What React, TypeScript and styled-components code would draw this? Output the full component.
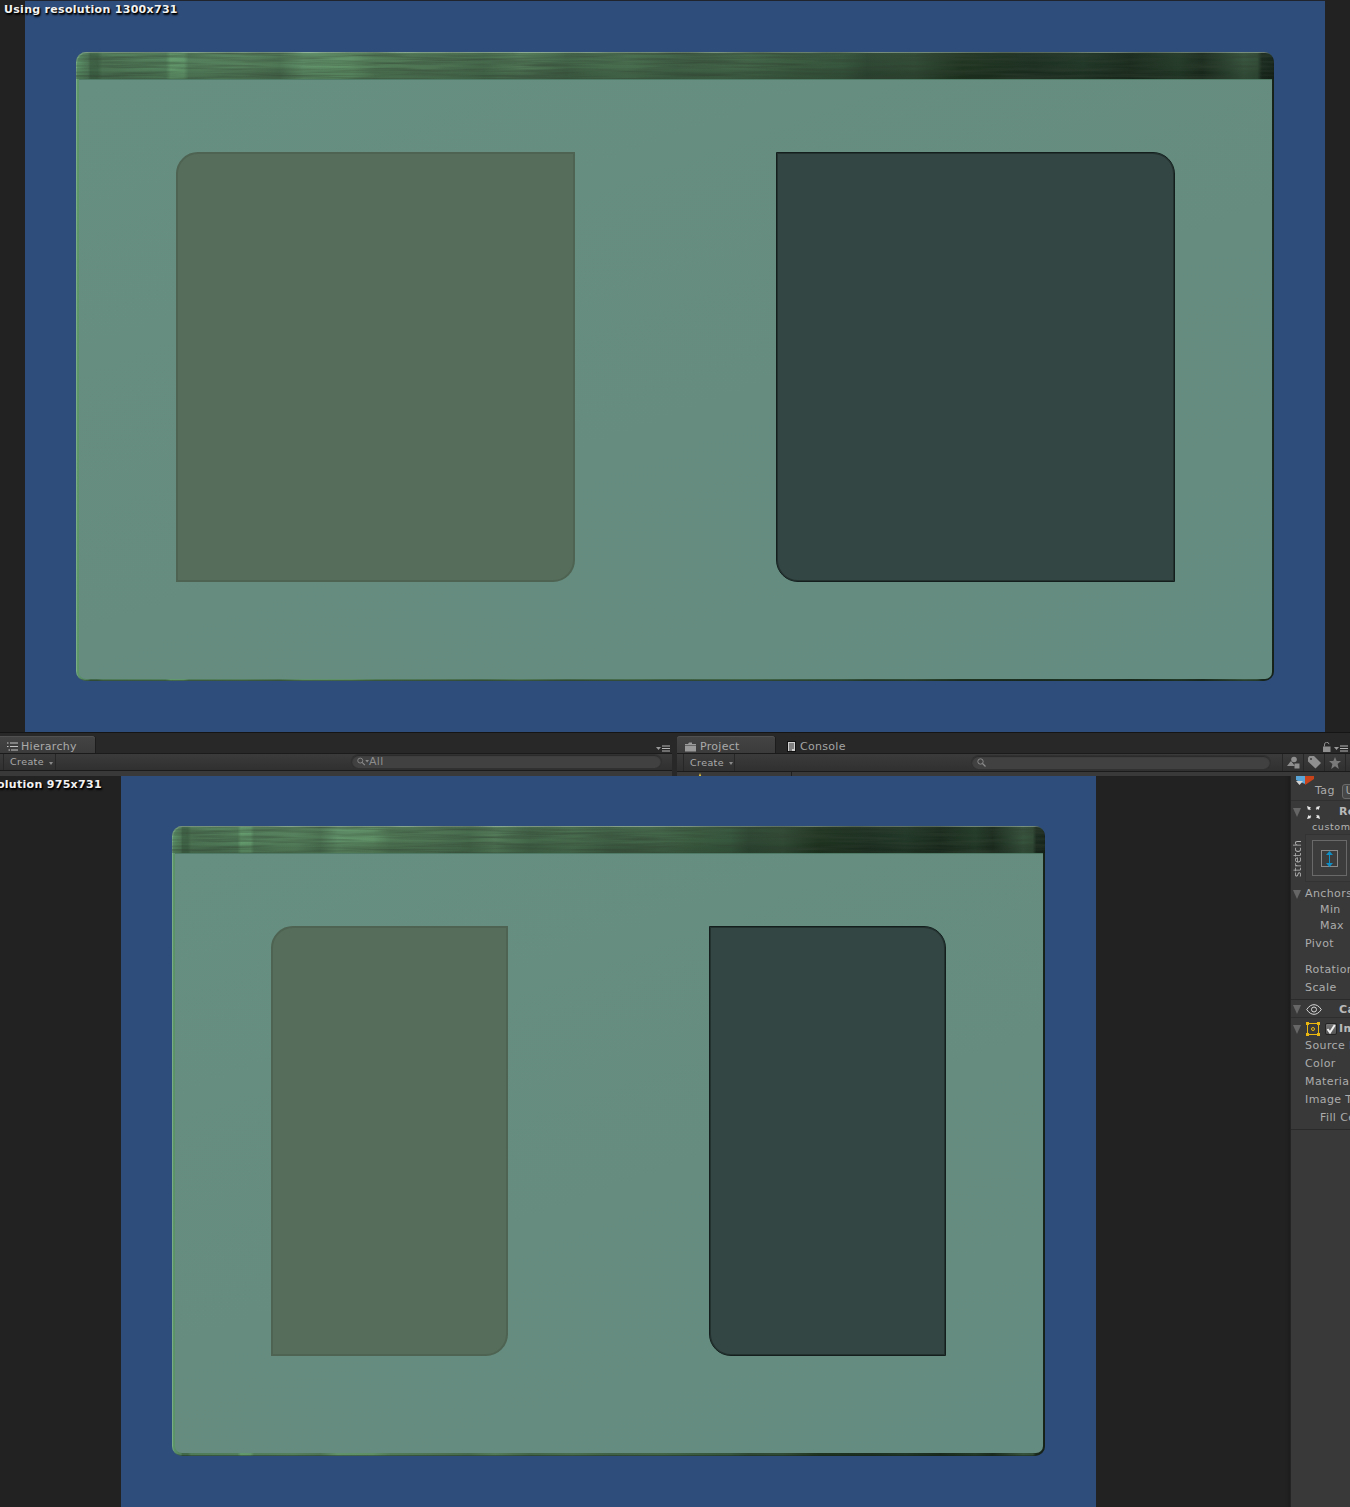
import React from 'react';
import styled, { createGlobalStyle } from 'styled-components';

const Global = createGlobalStyle`
  html, body { margin: 0; padding: 0; background: #222; }
  #root { width: 1350px; height: 1507px; overflow: hidden; }
  * { box-sizing: border-box; }
  svg { flex: none; }
`;

const FRAME_STOPS = `
  #5f9a6c 0%, #527f5c 1%, #426a4a 1.2%, #426a4a 1.8%, #507b58 2.2%, #527f5b 7.5%, #639a6c 7.9%, #61966a 9%, #527d5a 9.4%,
  #55805c 14%, #4d7554 17%, #61936a 19%, #5e8f65 23%, #517b57 25%, #4d7353 30%, #466b4c 34%, #527a58 37%,
  #426548 41%, #486d4e 46%, #406246 50%, #426548 56%, #3a5b3f 60%, #36563d 64%, #2d4733 66%, #304b35 70%,
  #1f3420 74%, #1c2f21 80%, #203626 84%, #192a1c 88%, #233a28 92%, #1a2b1d 94%, #36533d 97.5%, #314c37 98.6%, #1a2a1e 99%, #16241a 100%
`;

const Page = styled.div`
  width: 1350px;
  height: 1507px;
  display: flex;
  flex-direction: column;
  background: #222;
`;

const GameView = styled.section<{ $h: number; $left: number }>`
  position: relative;
  height: ${p => p.$h}px;
  flex: none;
  padding-left: ${p => p.$left}px;
  background: #222;
  overflow: hidden;
`;

const Stage = styled.div<{ $blue: number; $pt: number }>`
  width: ${p => p.$blue}px;
  height: 100%;
  padding: ${p => p.$pt}px 51px 51px;
  background: #2f4d7b;
  box-shadow: inset 0 ${p => (p.$pt > 50 ? 1 : 0)}px 0 #20242c;
`;

const ResolutionLabel = styled.span<{ $right: number; $top: number }>`
  position: absolute;
  top: ${p => p.$top}px;
  left: ${p => p.$right}px;
  font: bold 11px/15px "DejaVu Sans", sans-serif;
  letter-spacing: 0.3px;
  color: #f2f2f2;
  white-space: nowrap;
  text-shadow: 1px 1px 1px #000, 1px 2px 2px #000;
`;

const Card = styled.div`
  height: 100%;
  display: flex;
  flex-direction: column;
  padding: 0 2px 3px 3px;
  border-radius: 10px;
  background: linear-gradient(90deg, ${FRAME_STOPS});
  box-shadow: inset 1px 1px 0 rgba(190, 220, 195, 0.3), inset -1px -1px 0 rgba(20, 30, 24, 0.4);
  position: relative;
`;

const TitleBar = styled.div`
  position: relative;
  height: 27px;
  flex: none;
  margin: 0 -2px 0 -3px;
  border-radius: 10px 10px 0 0;
  overflow: hidden;
  background: linear-gradient(180deg, rgba(255,255,255,.3) 0, rgba(255,255,255,.02) 5%, rgba(0,0,0,0) 60%, rgba(0,0,0,.1) 78%, rgba(0,0,0,.12) 100%);
`;

const Grain = styled.svg`
  position: absolute;
  inset: 0;
  width: 100%;
  height: 100%;
`;

const CardBody = styled.div<{ $pl: number }>`
  flex: 1;
  display: flex;
  justify-content: space-between;
  padding: 72px 97px 97px ${p => p.$pl}px;
  border-top: 1px solid #4f7a66;
  border-radius: 0 0 7px 7px;
  background: linear-gradient(160deg, #668e81 0%, #658c7f 55%, #658c80 100%);
`;

const Panel = styled.div<{ $w: number; $tone: 'olive' | 'dark' }>`
  width: ${p => p.$w}px;
  height: 430px;
  border: ${p => (p.$tone === 'olive' ? '2px solid #4e6351' : '1px solid #131e1d')};
  box-shadow: ${p => (p.$tone === 'olive' ? 'none' : 'inset 0 0 0 1px #24322f')};
  background: ${p => (p.$tone === 'olive' ? '#566d5b' : '#344644')};
  border-radius: ${p => (p.$tone === 'olive' ? '22px 0 22px 0' : '0 22px 0 22px')};
`;

const Divider = styled.div`
  height: 44px;
  flex: none;
  display: grid;
  grid-template-columns: 672px 1fr;
  column-gap: 5px;
  background: #282828;
  border-top: 1px solid #151515;
  font: 11px/14px "DejaVu Sans", sans-serif;
  letter-spacing: 0.3px;
  color: #b4b4b4;
`;

const Dock = styled.div`
  display: flex;
  flex-direction: column;
  min-width: 0;
`;

const TabRow = styled.div`
  height: 20px;
  flex: none;
  padding-top: 3px;
  display: flex;
  align-items: stretch;
  position: relative;
`;

const Tab = styled.div<{ $active?: boolean; $w: number }>`
  width: ${p => p.$w}px;
  flex: none;
  display: flex;
  align-items: center;
  gap: 3px;
  padding: 4px 0 0 7px;
  border-radius: 0 3px 0 0;
  color: ${p => (p.$active ? '#aaa' : '#a4a4a4')};
  background: ${p => (p.$active ? 'linear-gradient(#444, #3b3b3b)' : 'transparent')};
  box-shadow: ${p => (p.$active ? 'inset 0 1px 0 #505050, 1px 0 0 #1d1d1d' : 'none')};
`;

const RoundTab = styled(Tab)<{ $pad?: number }>`
  border-radius: 3px 3px 0 0;
  padding-left: ${p => p.$pad ?? 8}px;
  gap: 4px;
`;

const TabTools = styled.div`
  margin-left: auto;
  display: flex;
  align-items: flex-end;
  gap: 3px;
  padding: 0 2px 1px 0;
`;

const Toolbar = styled.div<{ $extra?: number }>`
  height: ${p => 18 + (p.$extra ?? 0)}px;
  flex: none;
  display: flex;
  align-items: center;
  background: linear-gradient(#3b3b3b, #303030);
  border-top: 1px solid #1b1b1b;
  border-bottom: 1px solid #1b1b1b;
`;

const CreateButton = styled.div<{ $pad: number; $w: number }>`
  width: ${p => p.$w}px;
  flex: none;
  height: 100%;
  margin-left: ${p => p.$pad}px;
  padding-left: 6px;
  display: flex;
  align-items: center;
  gap: 5px;
  font-size: 9.5px;
  letter-spacing: 0.4px;
  color: #aaa;
  border-left: 1px solid #272727;
  border-right: 1px solid #272727;
`;

const Caret = styled.i`
  width: 0;
  height: 0;
  margin-top: 2px;
  border: 2.5px solid transparent;
  border-top: 3px solid #8a8a8a;
  border-bottom: 0;
`;

const SearchPill = styled.div<{ $left: number; $w: number; $mt?: number }>`
  width: ${p => p.$w}px;
  flex: none;
  height: 13px;
  margin: ${p => p.$mt ?? 0}px 0 0 ${p => p.$left}px;
  padding-left: 5px;
  display: flex;
  align-items: center;
  gap: 0;
  border-radius: 7px;
  background: #414141;
  box-shadow: inset 0 1px 1px #2a2a2a, 0 0 0 1px #313131;
  font-size: 11px;
  color: #8d8d8d;
`;

const Strip = styled.div`
  flex: 1;
  background: #393939;
  overflow: hidden;
`;

const TreeColumn = styled.div`
  width: 115px;
  height: 100%;
  border-right: 1px solid #1f1f1f;
  padding: 1px 0 0 19px;
  display: flex;
`;

const IconCell = styled.div<{ $gap?: number }>`
  width: 21px;
  height: 100%;
  flex: none;
  margin-left: ${p => p.$gap ?? 0}px;
  display: flex;
  align-items: center;
  justify-content: center;
  border-left: 1px solid #272727;
`;

const Bottom = styled.div`
  flex: 1;
  display: flex;
  min-height: 0;
`;

const Inspector = styled.aside`
  width: 60px;
  flex: none;
  background: #393939;
  border-left: 1px solid #242424;
  overflow: hidden;
  font: 11px/14px "DejaVu Sans", sans-serif;
  letter-spacing: 0.4px;
  color: #acacac;
  white-space: nowrap;
`;

const TagRow = styled.div`
  height: 25px;
  position: relative;
  padding: 8px 0 0 24px;
  display: flex;
  gap: 7px;
  border-bottom: 1px solid #303030;
`;

const CubeIcon = styled.svg`
  position: absolute;
  left: 4px;
  top: 0;
`;

const TagSelect = styled.span`
  width: 40px;
  height: 15px;
  flex: none;
  border: 1px solid #6a6a6a;
  border-radius: 3px;
  padding-left: 3px;
  font-size: 10px;
  line-height: 12px;
  background: #474747;
`;

const Row = styled.div<{ $h?: number; $indent?: number; $mt?: number }>`
  height: ${p => p.$h ?? 18}px;
  margin-top: ${p => p.$mt ?? 0}px;
  padding: 2px 0 0 ${p => p.$indent ?? 14}px;
  display: flex;
  align-items: center;
`;

const Fold = styled.i`
  width: 0;
  height: 0;
  margin-right: 3px;
  flex: none;
  border-left: 4.5px solid transparent;
  border-right: 4.5px solid transparent;
  border-top: 9px solid #666;
`;

const HeaderRow = styled.div<{ $h: number; $line?: boolean; $pt?: number }>`
  height: ${p => p.$h}px;
  padding: ${p => p.$pt ?? 2}px 0 0 2px;
  display: flex;
  align-items: center;
  border-bottom: ${p => (p.$line ? '1px solid #2e2e2e' : '0')};
  & > svg { margin-left: 2px; }
`;

const Plain = styled.span`
  flex: none;
  margin-left: 1px;
`;

const Strong = styled.b<{ $left: number }>`
  flex: none;
  margin-left: ${p => p.$left}px;
  font-size: 11px;
  color: #b9b9b9;
`;

const Small = styled.div`
  height: 13px;
  padding-left: 21px;
  font-size: 9.5px;
  line-height: 12px;
  letter-spacing: 0.6px;
  color: #b4b4b4;
`;

const AnchorArea = styled.div`
  height: 51px;
  display: flex;
  align-items: flex-start;
`;

const StretchLabel = styled.span`
  width: 14px;
  height: 48px;
  flex: none;
  writing-mode: vertical-rl;
  transform: rotate(180deg);
  text-align: center;
  font-size: 10px;
  line-height: 14px;
  letter-spacing: 0.3px;
  color: #b4b4b4;
`;

const AnchorBack = styled.div`
  width: 60px;
  height: 48px;
  flex: none;
  display: flex;
  padding: 5px 0 0 6px;
  background: #3c3c3c;
  border: 1px solid #333;
`;

const AnchorBox = styled.div`
  width: 35px;
  height: 36px;
  flex: none;
  display: flex;
  align-items: center;
  justify-content: center;
  border: 1px solid #696969;
`;

const AnchorInner = styled.div`
  width: 17px;
  height: 17px;
  display: flex;
  justify-content: center;
  border: 1px solid #8a8a8a;
`;

const Sep = styled.div<{ $mt?: number }>`
  height: 1px;
  margin-top: ${p => p.$mt ?? 0}px;
  background: #2a2a2a;
`;

const Check = styled.span`
  width: 12px;
  height: 12px;
  margin-left: 5px;
  flex: none;
  display: flex;
  align-items: center;
  justify-content: center;
  border-radius: 2px;
  background: linear-gradient(#767676, #555);
  border: 1px solid #242424;
`;

const Hole = styled.div`
  flex: 1;
  background: #222;
  box-shadow: inset -4px 0 3px -2px #1d1d1d;
`;

const ListIcon = () => (
  <svg width="11" height="9" viewBox="0 0 11 9"><path d="M0 1h1.5M3 1h8M0 4.5h1.5M3 4.5h8M1.5 8H3M4 8h7" stroke="#c4c4c4" fill="none" /></svg>
);
const FolderIcon = () => (
  <svg width="11" height="10" viewBox="0 0 11 10"><path d="M0 2h3l1-1.500h3V2h4v7.500H0z" fill="#9a9a9a" /><path d="M0 3.500h11" stroke="#666" /></svg>
);
const DocIcon = () => (
  <svg width="9" height="11" viewBox="0 0 9 11"><rect x=".5" y=".5" width="8" height="10" fill="#cfcfcf" stroke="#111" /><path d="M2 3h5M2 5h5M2 7h5M2 9h3" stroke="#333" /></svg>
);
const MenuIcon = () => (
  <svg width="14" height="7" viewBox="0 0 14 7"><path d="M0 2h5L2.500 5z" fill="#9a9a9a" /><path d="M6 1h8M6 3.500h8M6 6h8" stroke="#b5b5b5" /></svg>
);
const SearchIcon = ({ dropdown }: { dropdown?: boolean }) => (
  <svg width={dropdown ? 12 : 10} height="9" viewBox={dropdown ? '0 0 13 9' : '0 0 10 9'}>
    <circle cx="3.500" cy="3.500" r="2.700" fill="none" stroke="#8b8b8b" /><path d="M5.500 5.500L8.500 8.500" stroke="#8b8b8b" strokeWidth="1.200" />
    {dropdown && <path d="M9 3h4l-2 2.500z" fill="#8b8b8b" />}
  </svg>
);
const LockIcon = () => (
  <svg width="8" height="10" viewBox="0 0 8 10"><path d="M1.500 4.500V3a2.200 2.200 0 0 1 4.500-.8" fill="none" stroke="#8f8f8f" /><rect y="4.500" width="7.500" height="5.500" fill="#8f8f8f" /></svg>
);
const ShapesIcon = () => (
  <svg width="13" height="13" viewBox="0 0 13 13"><circle cx="7" cy="3.500" r="2.800" fill="#8f8f8f" /><path d="M0 10l4-5 4 5z" fill="#8f8f8f" /><rect x="7.500" y="7.500" width="5" height="5" fill="#8f8f8f" /></svg>
);
const TagIcon = () => (
  <svg width="13" height="13" viewBox="0 0 13 13"><path d="M0 1.500L1.500 0h4.500l7 7-5.500 5.500-7.500-7z" fill="#8f8f8f" /><circle cx="3" cy="3" r="1" fill="#3a3a3a" /></svg>
);
const StarIcon = () => (
  <svg width="12" height="12" viewBox="0 0 12 12"><path d="M6 0l1.700 4H12L8.600 6.900 9.800 12 6 9.200 2.200 12l1.200-5.100L0 4h4.300z" fill="#7a7a7a" /></svg>
);
const RectIcon = () => (
  <svg width="15" height="15" viewBox="0 0 15 15" fill="#e8e8e8"><path d="M1 1l4 1.500-1 1 .8 1-1 .8-.8-1-1 .7zM14 1l-1.500 4-1-1-1 .8-.8-1 1-.8-.7-1zM1 14l1.500-4 1 1 1-.8.8 1-1 .8.700 1zM14 14l-4-1.500 1-1-.8-1 1-.8.800 1 1-.7z" /></svg>
);
const EyeIcon = () => (
  <svg width="16" height="11" viewBox="0 0 16 11" fill="none" stroke="#d5d5d5"><path d="M.7 5.500C3 2 5.500.7 8 .7s5 1.300 7.300 4.800C13 9 10.500 10.300 8 10.300S3 9 .7 5.500z" /><circle cx="8" cy="5.500" r="2.500" /></svg>
);
const ImageIcon = () => (
  <svg width="14" height="14" viewBox="0 0 14 14" fill="none" stroke="#e9b70f"><rect x="1.500" y="1.500" width="11" height="11" /><circle cx="7" cy="7" r="1.500" /><path d="M0 0h3v3H0zM11 0h3v3h-3zM0 11h3v3H0zM11 11h3v3h-3z" fill="#e9b70f" stroke="none" /></svg>
);
const CheckMark = () => (
  <svg width="10" height="10" viewBox="0 0 10 10"><path d="M1.500 5L4 8.500 8.800 1" fill="none" stroke="#f0f0f0" strokeWidth="2" /></svg>
);
const StarTip = () => (
  <svg width="8" height="5" viewBox="0 0 8 5"><path d="M4 0l1.500 4H8v1H0V4h2.500z" fill="#e8c63a" /></svg>
);
const Cube = () => (
  <CubeIcon width="20" height="14" viewBox="0 0 20 14"><path d="M1 0h9v8L1 4z" fill="#5aa5d8" /><path d="M10 0h9v3l-9 6z" fill="#c8421a" /><path d="M1 5h7L4.500 9z" fill="#d5d5d5" /></CubeIcon>
);
const StretchArrow = () => (
  <svg width="7" height="16" viewBox="0 0 7 16"><path d="M3.500 1v14" stroke="#0e8fc6" /><path d="M0 4l3.500-4L7 4zM0 12l3.500 4L7 12z" fill="#0e8fc6" /></svg>
);

const StreakGrain = ({ id }: { id: string }) => (
  <Grain preserveAspectRatio="none">
    <filter id={id} x="0" y="0" width="100%" height="100%">
      <feTurbulence type="fractalNoise" baseFrequency="0.012 0.3" numOctaves="3" seed="7" />
      <feColorMatrix values="0 0 0 0 0.03  0 0 0 0 0.05  0 0 0 0 0.03  1.1 0 0 0 -0.38" />
    </filter>
    <rect width="100%" height="100%" filter={`url(#${id})`} />
  </Grain>
);

const GameBlock = ({ h, pt, left, blue, panel, label, labelLeft, labelTop, pl, id }: { h: number; pt: number; left: number; blue: number; panel: number; label: string; labelLeft: number; labelTop: number; pl: number; id: string }) => (
  <GameView $h={h} $left={left}>
    <Stage $blue={blue} $pt={pt}>
      <Card>
        <TitleBar><StreakGrain id={id} /></TitleBar>
        <CardBody $pl={pl}>
          <Panel $w={panel} $tone="olive" />
          <Panel $w={panel} $tone="dark" />
        </CardBody>
      </Card>
    </Stage>
    <ResolutionLabel $right={labelLeft} $top={labelTop}>{label}</ResolutionLabel>
  </GameView>
);

const fields = ['Source Image', 'Color', 'Material', 'Image Type'];

export default function App() {
  return (
    <Page>
      <Global />
      <GameBlock id="grain-a" h={732} pt={52} left={25} blue={1300} panel={399} pl={97} label="Using resolution 1300x731" labelLeft={4} labelTop={2} />
      <Divider>
        <Dock>
          <TabRow>
            <Tab $active $w={95}><ListIcon /><span>Hierarchy</span></Tab>
            <TabTools><MenuIcon /></TabTools>
          </TabRow>
          <Toolbar>
            <CreateButton $pad={3} $w={53}>Create <Caret /></CreateButton>
            <SearchPill $left={296} $w={309} $mt={-1}><SearchIcon dropdown /><span>All</span></SearchPill>
          </Toolbar>
          <Strip />
        </Dock>
        <Dock>
          <TabRow>
            <RoundTab $active $w={98}><FolderIcon /><span>Project</span></RoundTab>
            <RoundTab $w={80} $pad={12}><DocIcon /><span>Console</span></RoundTab>
            <TabTools><LockIcon /><MenuIcon /></TabTools>
          </TabRow>
          <Toolbar $extra={1}>
            <CreateButton $pad={6} $w={52}>Create <Caret /></CreateButton>
            <SearchPill $left={237} $w={298}><SearchIcon /></SearchPill>
            <IconCell $gap={12}><ShapesIcon /></IconCell>
            <IconCell><TagIcon /></IconCell>
            <IconCell><StarIcon /></IconCell>
            <IconCell />
          </Toolbar>
          <Strip>
            <TreeColumn><StarTip /></TreeColumn>
          </Strip>
        </Dock>
      </Divider>
      <Bottom>
        <GameBlock id="grain-b" h={731} pt={50} left={121} blue={975} panel={237} pl={96} label="Using resolution 975x731" labelLeft={-64} labelTop={1} />
        <Hole />
        <Inspector>
          <TagRow><Cube /><span>Tag</span><TagSelect>Untagged</TagSelect></TagRow>
          <HeaderRow $h={20}><Fold /><RectIcon /><Strong $left={18}>Rect Transform</Strong></HeaderRow>
          <Small>custom</Small>
          <AnchorArea>
            <StretchLabel>stretch</StretchLabel>
            <AnchorBack>
              <AnchorBox><AnchorInner><StretchArrow /></AnchorInner></AnchorBox>
            </AnchorBack>
          </AnchorArea>
          <HeaderRow $h={16}><Fold /><Plain>Anchors</Plain></HeaderRow>
          <Row $h={16} $indent={29}>Min</Row>
          <Row $h={16} $indent={29}>Max</Row>
          <Row $mt={1}>Pivot</Row>
          <Row $mt={8}>Rotation</Row>
          <Row>Scale</Row>
          <Sep $mt={3} />
          <HeaderRow $h={18} $line><Fold /><EyeIcon /><Strong $left={17}>Canvas Renderer</Strong></HeaderRow>
          <HeaderRow $h={18} $pt={4}><Fold /><ImageIcon /><Check><CheckMark /></Check><Strong $left={2}>Image (Script)</Strong></HeaderRow>
          {fields.map(f => <Row key={f}>{f}</Row>)}
          <Row $indent={29}>Fill Center</Row>
          <Sep $mt={3} />
        </Inspector>
      </Bottom>
    </Page>
  );
}
